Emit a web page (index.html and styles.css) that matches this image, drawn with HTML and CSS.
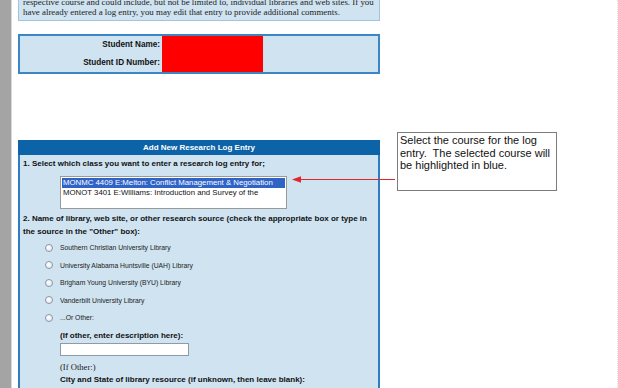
FILE: index.html
```html
<!DOCTYPE html>
<html lang="en">
<head>
    <meta charset="UTF-8" />
    <title>Research Log Entry</title>
    <link rel="stylesheet" href="styles.css">
</head>
<body>
    <div class="page">
        <div class="gutter"></div>
        <div class="content">
            <!-- Intro text (scrolled, top cut off) -->
            <div class="box intro">
                <p>respective course and could include, but not be limited to, individual libraries and web sites. If you<br>have already entered a log entry, you may edit that entry to provide additional comments.</p>
            </div>

            <!-- Student info -->
            <div class="box student">
                <div class="student-labels">
                    <span>Student Name:</span>
                    <span>Student ID Number:</span>
                </div>
                <div class="redact"></div>
            </div>

            <!-- New entry form -->
            <div class="box entry">
                <div class="entry-head">Add New Research Log Entry</div>
                <div class="entry-body">
                    <p class="q">1. Select which class you want to enter a research log entry for;</p>
                    <div class="listbox">
                        <div class="opt selected">MONMC 4409 E:Melton: Conflict Management &amp; Negotiation</div>
                        <div class="opt">MONOT 3401 E:Williams: Introduction and Survey of the</div>
                    </div>
                    <p class="q q2">2. Name of library, web site, or other research source (check the appropriate box or type in the source in the "Other" box):</p>
                    <ul class="radios">
                        <li><span class="radio"></span>Southern Christian University Library</li>
                        <li><span class="radio"></span>University Alabama Huntsville (UAH) Library</li>
                        <li><span class="radio"></span>Brigham Young University (BYU) Library</li>
                        <li><span class="radio"></span>Vanderbilt University Library</li>
                        <li><span class="radio"></span>...Or Other:</li>
                    </ul>
                    <p class="q sub">(If other, enter description here):</p>
                    <div class="textbox"></div>
                    <p class="serif-note">(If Other:)</p>
                    <p class="q sub city">City and State of library resource (if unknown, then leave blank):</p>
                </div>
            </div>
        </div>

        <!-- Annotation -->
        <svg class="arrow" width="103" height="9" viewBox="0 0 103 9">
            <line x1="7" y1="4.5" x2="103" y2="4.5" stroke="#e3262b" stroke-width="1.2" />
            <polygon points="0,4.5 9,1.2 9,7.8" fill="#e3262b" />
        </svg>
        <div class="callout">Select the course for the log entry.&nbsp; The selected course will be highlighted in blue.</div>
    </div>
</body>
</html>
```

FILE: styles.css
```css
* {
    box-sizing: border-box;
    margin: 0;
    padding: 0;
}

html, body {
    height: 100%;
}

body {
    background: #fff;
    font-family: 'Liberation Sans', Arial, sans-serif;
    color: #111;
    overflow: hidden;
}

.page {
    position: relative;
    display: flex;
    width: 618px;
    height: 388px;
    border-right: 1px dotted #e6e4d6;
    overflow: hidden;
}

.gutter {
    width: 12px;
    flex-shrink: 0;
    background: #a4a4a4;
    border-right: 1px solid #d8d8d8;
}

.content {
    margin-left: 6px;
    width: 362px;
}

.box {
    background: #cfe3f1;
}

/* intro text */
.intro {
    margin-top: -7px;
    padding: 3px 4px 3px 4px;
    border: 1px solid #9ec4e1;
    font-family: 'Liberation Serif', 'Times New Roman', serif;
    font-size: 8.9px;
    line-height: 10px;
    color: #222;
    white-space: nowrap;
    overflow: hidden;
}

/* student box */
.student {
    margin-top: 13px;
    height: 40px;
    border: 2px solid #3b86c6;
    display: flex;
}

.student-labels {
    width: 140px;
    display: flex;
    flex-direction: column;
    align-items: flex-end;
    font-weight: bold;
    font-size: 8.2px;
}

.student-labels span {
    height: 18px;
    line-height: 18px;
}

.redact {
    margin-left: 2px;
    width: 101px;
    background: #ff0000;
}

/* entry form */
.entry {
    margin-top: 66px;
    border: 2px solid #2f7dc0;
    border-top: none;
    border-bottom: none;
    height: 260px;
}

.entry-head {
    height: 15px;
    margin: 0 -2px;
    background: #0c63a7;
    color: #fff;
    font-weight: bold;
    font-size: 8px;
    line-height: 15px;
    text-align: center;
}

.entry-body {
    padding: 4px 0 0 3px;
}

.q {
    font-weight: bold;
    font-size: 8px;
    line-height: 10px;
    white-space: nowrap;
}

.listbox {
    margin: 7px 0 0 37px;
    width: 227px;
    height: 33px;
    background: #fff;
    border: 1px solid #9a9a9a;
    padding: 1px;
}

.opt {
    height: 10px;
    line-height: 10px;
    font-size: 7.8px;
    padding-left: 1px;
    white-space: nowrap;
    color: #111;
}

.opt.selected {
    background: #2f63c6;
    color: #fff;
}

.q2 {
    margin-top: 3px;
    line-height: 13px;
    white-space: normal;
    width: 358px;
}

.radios {
    list-style: none;
    margin-top: 1px;
}

.radios li {
    display: flex;
    align-items: center;
    height: 17.5px;
    font-size: 6.8px;
    color: #222;
    white-space: nowrap;
}

.radio {
    width: 8px;
    height: 8px;
    margin: 0 7px 0 22px;
    border-radius: 50%;
    border: 1px solid #8a96a4;
    background: radial-gradient(circle at 40% 35%, #ffffff, #dfe3e8);
}

.sub {
    margin: 4px 0 0 37px;
}

.textbox {
    margin: 2px 0 0 37px;
    width: 129px;
    height: 13px;
    background: #fff;
    border: 1px solid #8e9aa6;
}

.serif-note {
    margin: 6px 0 0 37px;
    font-family: 'Liberation Serif', 'Times New Roman', serif;
    font-size: 8.6px;
    line-height: 11px;
    color: #222;
}

.city {
    margin-top: 2px;
}

/* annotation overlay */
.arrow {
    position: absolute;
    left: 292px;
    top: 175px;
}

.callout {
    position: absolute;
    left: 397px;
    top: 132px;
    width: 160px;
    height: 59px;
    background: #fff;
    border: 1px solid #7c7c7c;
    padding: 1px 2px;
    font-size: 11px;
    line-height: 12.5px;
    color: #111;
}
```
